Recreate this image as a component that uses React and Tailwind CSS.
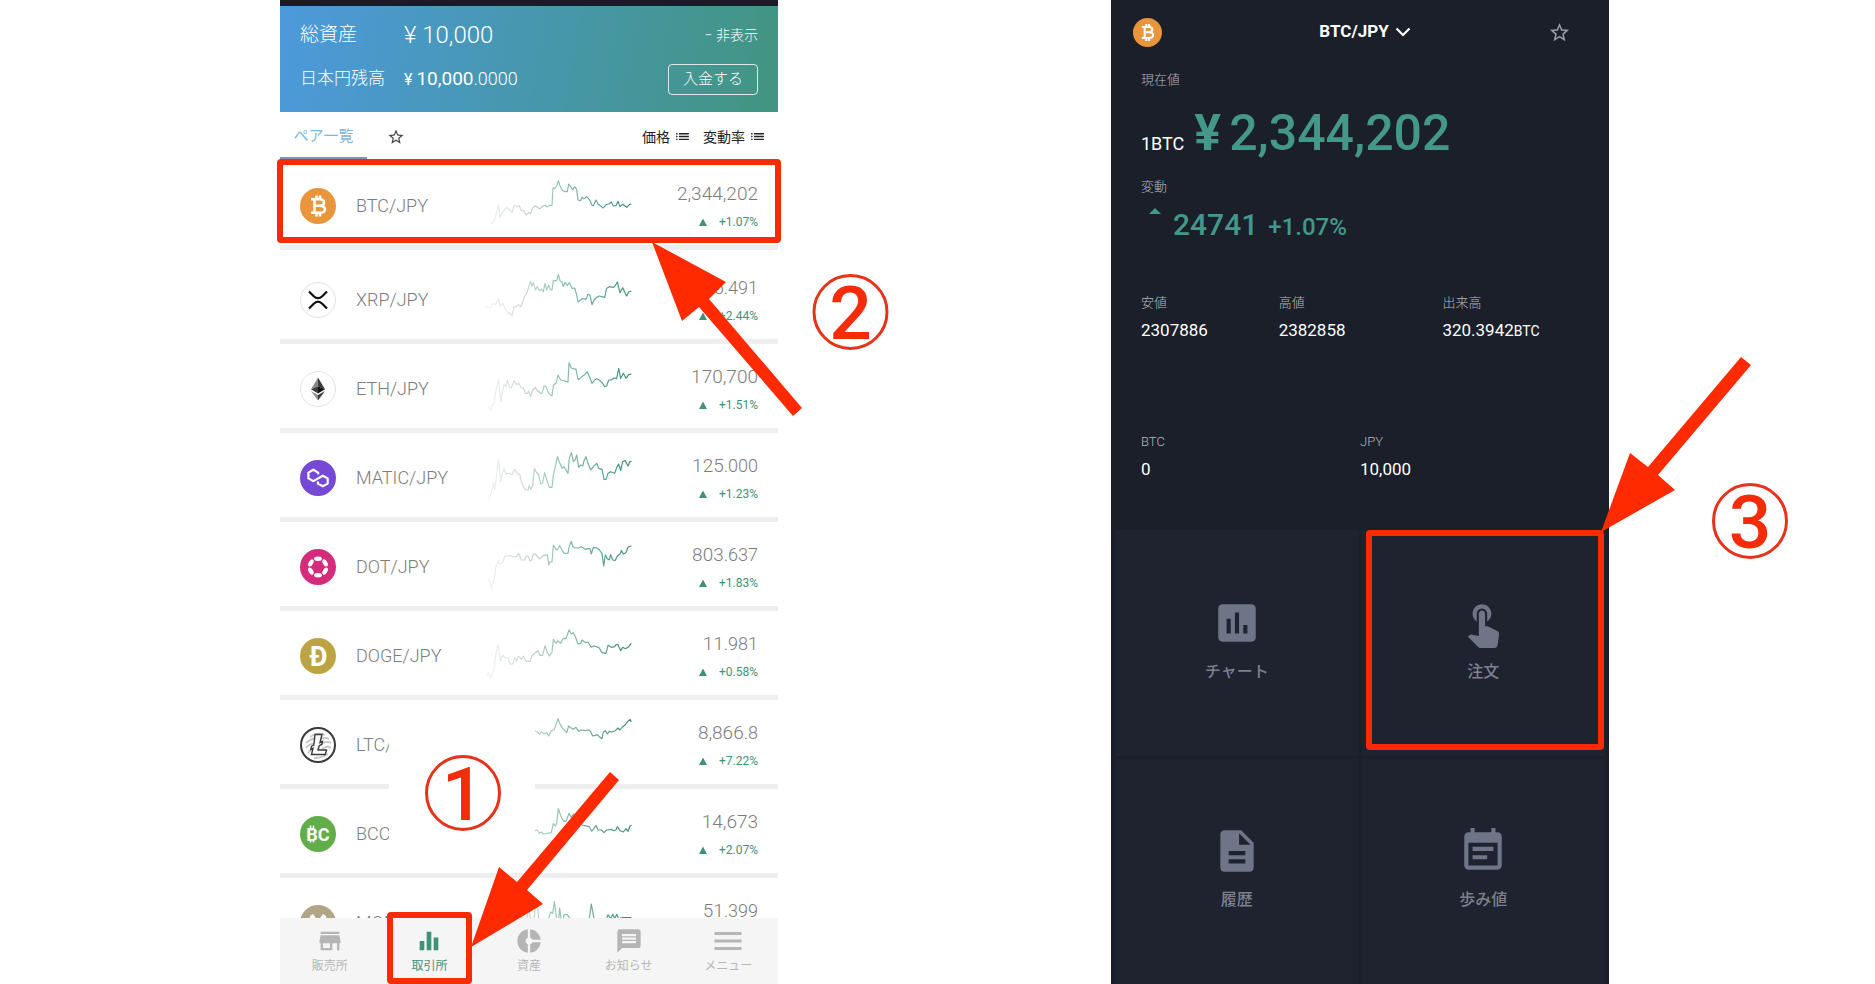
import React from 'react';
import {
    MdStore,
    MdEqualizer,
    MdDonutSmall,
    MdMessage,
    MdMenu,
    MdList,
    MdStarBorder,
    MdAssessment,
    MdTouchApp,
    MdDescription,
    MdEventNote,
} from 'react-icons/md';

const BtcCoin = ({ className }) => (
    <svg viewBox="0 0 36 36" className={className}>
        <circle cx="18" cy="18" r="18" fill="#e8953c" />
        <path
            d="M11 11.200 H19.500 Q24 11.200 24 14.400 Q24 17.600 19.500 17.700 H15 M19.500 17.700 Q25 17.900 25 21.200 Q25 24.800 19.500 24.800 H11 M14.500 11.200 V24.800 M16.500 7.500 V11 M20 7.500 V11 M16.500 25 V28.500 M20 25 V28.500"
            fill="none"
            stroke="#fff"
            strokeWidth="2.600"
        />
    </svg>
);

const XrpCoin = ({ className }) => (
    <svg viewBox="0 0 36 36" className={className}>
        <circle cx="18" cy="18" r="17.5" fill="#fff" stroke="#e2e2e2" />
        <path d="M9 9.5 L13.5 14 Q18 18.5 22.5 14 L27 9.5 M9 26.5 L13.5 22 Q18 17.500 22.500 22 L27 26.500" fill="none" stroke="#111" strokeWidth="2.200" />
    </svg>
);

const EthCoin = ({ className }) => (
    <svg viewBox="0 0 36 36" className={className}>
        <circle cx="18" cy="18" r="17.5" fill="#fff" stroke="#e2e2e2" />
        <path d="M18 6.500 L11 18.300 L18 15.200 Z" fill="#8a8a8a" />
        <path d="M18 6.500 L25 18.300 L18 15.200 Z" fill="#3c3c3b" />
        <path d="M11 18.300 L18 15.200 V22.500 Z" fill="#3c3c3b" />
        <path d="M25 18.300 L18 15.200 V22.500 Z" fill="#141414" />
        <path d="M11 20 L18 24 V29.500 Z" fill="#8c8c8c" />
        <path d="M25 20 L18 24 V29.500 Z" fill="#3c3c3b" />
    </svg>
);

const MaticCoin = ({ className }) => (
    <svg viewBox="0 0 36 36" className={className}>
        <circle cx="18" cy="18" r="18" fill="#7548d6" />
        <path
            d="M18.200 14.500 V12.600 L13.300 9.800 L8.400 12.600 V18.300 L13.300 21.100 L22.800 15.700 L27.700 18.400 V23.600 L22.800 26.300 L17.900 23.600 V21.600"
            fill="none"
            stroke="#fff"
            strokeWidth="2.200"
            strokeLinejoin="round"
        />
    </svg>
);

const DotCoin = ({ className }) => (
    <svg viewBox="0 0 36 36" className={className}>
        <circle cx="18" cy="18" r="18" fill="#d42c7a" />
        {[0, 60, 120, 180, 240, 300].map((angle) => (
            <ellipse key={angle} cx="18" cy="9.8" rx="3.900" ry="2.200" fill="#fff" transform={`rotate(${angle} 18 18)`} />
        ))}
    </svg>
);

const DogeCoin = ({ className }) => (
    <svg viewBox="0 0 36 36" className={className}>
        <circle cx="18" cy="18" r="18" fill="#bca443" />
        <text x="18.500" y="27.500" textAnchor="middle" fontSize="27" fontWeight="700" fill="#fff">Ð</text>
    </svg>
);

const LtcCoin = ({ className }) => (
    <svg viewBox="0 0 36 36" className={className}>
        <circle cx="18" cy="18" r="17" fill="#fff" stroke="#3a3a3a" strokeWidth="2" />
        <path d="M10 10 Q18 4 25 8 M6 16 Q12 11 17 11 M21 12 Q25 10 29 12 M6 21 Q10 16 14 17 M20 18 Q26 13 31 16 M8 26 Q11 22 14 22 M22 22 Q27 18 31 21 M14 31 Q22 31 28 27" fill="none" stroke="#c8c8c8" strokeWidth="1.800" />
        <path d="M15 7.500 H22 L20 15.500 L22.500 14.500 L21.800 17.500 L19.200 18.700 L18 23 H26.500 L25.300 27.500 H11.500 L13 21.300 L10.800 22.200 L11.600 19.200 L13.800 18 Z" fill="#fff" stroke="#3a3a3a" strokeWidth="1.400" />
    </svg>
);

const BccCoin = ({ className }) => (
    <svg viewBox="0 0 36 36" className={className}>
        <circle cx="18" cy="18" r="18" fill="#61ad4a" />
        <text x="18" y="24.500" textAnchor="middle" fontSize="18" fontWeight="700" fill="#fff">BC</text>
        <path d="M10.500 9.500 V12 M13.500 9.500 V12 M10.500 24 V26.500 M13.500 24 V26.500" stroke="#fff" strokeWidth="1.600" />
    </svg>
);

const MonaCoin = ({ className }) => (
    <svg viewBox="0 0 36 36" className={className}>
        <circle cx="18" cy="18" r="18" fill="#b0a587" />
        <path d="M8 27 L10 11 L13 9 L16 13 H20 L23 9 L26 11 L28 27 H24 L22.500 17 L18 23 L13.500 17 L12 27 Z" fill="#fff" />
    </svg>
);

// chartTop is where the row starts in the coordinates of its points
const pairs = [
    {
        name: 'BTC/JPY', coin: BtcCoin, price: '2,344,202', decimals: '', change: '+1.07%', chartTop: 3,
        points: '32,190 40,188 48,165 56,135 60,172 66,160 74,148 80,143 88,148 96,158 102,136 110,140 118,137 124,152 132,152 138,165 146,158 152,160 158,144 166,137 174,143 180,146 188,138 196,136 202,141 208,136 216,136 219,83 224,86 230,78 235,62 240,78 248,92 256,95 262,95 266,72 272,80 278,90 284,80 290,88 294,120 302,122 306,112 312,116 320,110 328,118 336,136 340,137 348,120 354,132 362,138 370,144 378,134 386,132 394,126 400,138 408,137 414,124 420,140 428,133 440,142 448,134 454,132',
    },
    {
        name: 'XRP/JPY', coin: XrpCoin, price: '65', decimals: '.491', change: '+2.44%', chartTop: 285,
        points: '16,440 28,443 34,440 38,430 46,435 56,416 60,438 68,430 76,447 84,458 90,460 96,467 102,440 108,440 116,434 122,440 128,426 134,410 142,395 148,375 152,363 156,380 160,368 166,390 172,380 178,392 186,388 190,395 195,370 200,390 206,376 212,390 216,390 220,362 230,362 235,343 240,362 246,366 250,380 255,367 262,376 268,368 276,385 284,384 290,405 294,426 302,420 308,415 318,418 324,403 330,406 336,434 342,420 350,412 358,408 374,412 380,385 388,380 400,382 406,376 412,366 420,398 428,383 434,396 440,408 446,396 454,393',
    },
    {
        name: 'ETH/JPY', coin: EthCoin, price: '170,700', decimals: '', change: '+1.51%', chartTop: 552,
        points: '22,740 28,742 32,752 36,738 42,730 48,690 56,660 62,724 66,705 72,672 78,680 82,660 88,680 94,684 102,662 110,674 116,670 124,684 130,684 136,700 142,700 146,694 152,710 158,690 166,682 174,694 182,700 186,700 192,678 198,680 206,700 216,708 220,676 228,670 234,645 242,660 250,662 258,664 264,666 267,608 274,624 280,626 288,628 294,658 300,656 308,648 314,644 322,635 330,655 336,670 344,660 350,656 358,660 366,668 374,680 380,678 386,660 394,660 402,654 410,656 416,625 422,655 430,640 438,655 446,644 454,642',
    },
    {
        name: 'MATIC/JPY', coin: MaticCoin, price: '125', decimals: '.000', change: '+1.23%', chartTop: 39,
        points: '22,238 30,232 36,210 40,190 44,208 50,165 56,120 62,185 68,160 72,145 78,162 86,160 96,164 104,148 112,160 120,166 124,185 130,198 136,210 144,210 148,196 152,208 158,198 163,145 170,158 176,165 182,192 188,188 194,158 200,178 208,202 216,202 220,165 226,140 232,110 238,125 246,145 252,140 258,150 264,160 268,115 274,98 280,125 286,118 290,105 296,142 302,135 308,138 313,120 318,110 324,130 332,150 340,140 350,130 356,145 366,148 372,178 378,178 384,160 392,155 404,160 410,142 416,132 422,152 428,125 436,122 444,138 450,124 454,124',
    },
    {
        name: 'DOT/JPY', coin: DotCoin, price: '803', decimals: '.637', change: '+1.83%', chartTop: 306,
        points: '22,480 30,482 34,506 42,480 48,440 54,422 58,432 68,428 74,410 90,406 98,410 110,410 116,400 124,420 134,420 138,408 144,408 150,422 154,422 160,402 166,402 174,412 180,416 190,407 202,404 206,434 210,426 216,426 220,375 228,388 232,390 239,377 246,390 252,400 264,400 268,378 274,364 278,380 286,384 296,384 304,380 316,388 324,386 330,386 334,402 340,382 350,384 358,390 366,400 371,438 376,405 382,416 388,420 392,404 398,420 406,421 412,408 420,402 424,392 430,402 438,398 444,382 454,377',
    },
    {
        name: 'DOGE/JPY', coin: DogeCoin, price: '11', decimals: '.981', change: '+0.58%', chartTop: 573,
        points: '20,768 26,758 32,775 40,756 48,700 54,675 62,724 68,705 74,712 84,714 90,732 98,732 104,712 110,722 116,708 124,718 130,708 138,724 150,724 156,708 166,698 174,692 180,706 188,706 195,677 202,698 208,708 216,696 220,658 228,670 234,662 242,670 250,655 258,656 267,630 274,642 280,638 286,650 294,672 302,670 306,660 316,668 324,666 334,682 342,678 350,680 358,684 366,698 378,700 384,676 394,682 404,680 408,674 414,674 422,692 428,682 436,686 444,682 454,670',
    },
    {
        name: 'LTC/JPY', coin: LtcCoin, price: '8,866', decimals: '.8', change: '+7.22%', chartTop: 0,
        points: '100,120 130,104 158,95 166,93 172,96 178,103 184,95 192,102 200,98 206,108 214,92 222,90 226,80 234,56 240,72 248,85 260,98 266,78 274,84 280,88 288,82 296,94 304,90 316,92 326,90 332,95 338,108 346,106 352,104 358,110 366,116 370,96 376,92 382,102 388,94 396,96 406,92 414,84 420,90 428,80 436,74 442,66 450,58 454,66',
    },
    {
        name: 'BCC/JPY', coin: BccCoin, price: '14,673', decimals: '', change: '+2.07%', chartTop: 267,
        points: '100,395 140,400 165,392 172,390 178,400 184,396 190,402 214,398 220,370 226,378 230,370 235,326 244,352 250,362 258,365 267,340 274,352 280,342 290,352 298,372 310,376 328,380 335,394 340,388 348,376 354,390 364,390 372,398 380,390 394,388 400,392 408,390 412,380 420,392 430,396 438,386 444,394 450,378 455,376',
    },
    {
        name: 'MONA/JPY', coin: MonaCoin, price: '51', decimals: '.399', change: '+1.90%', chartTop: 534,
        points: '100,640 140,660 146,625 152,660 162,655 166,622 174,628 176,660 206,656 212,636 218,640 223,605 230,656 236,656 239,624 243,656 250,656 252,644 262,644 270,656 328,656 334,612 342,656 380,656 384,644 392,656 398,643 404,656 410,643 416,656 428,653 454,653',
    },
];

const navItems = [
    { label: '販売所', icon: MdStore, size: 28 },
    { label: '取引所', icon: MdEqualizer, size: 28, active: true },
    { label: '資産', icon: MdDonutSmall, size: 28 },
    { label: 'お知らせ', icon: MdMessage, size: 28 },
    { label: 'メニュー', icon: MdMenu, size: 36 },
];

const tiles = [
    { label: 'チャート', icon: MdAssessment },
    { label: '注文', icon: MdTouchApp },
    { label: '履歴', icon: MdDescription },
    { label: '歩み値', icon: MdEventNote },
];

const Step = ({ cx, cy, n }) => (
    <g>
        <circle cx={cx} cy={cy} r="36.5" fill="none" stroke="#e8321a" strokeWidth="3" />
        <text x={cx} y={cy + 27} textAnchor="middle" fontSize="75" fontWeight="500" fill="#f52c0a">{n}</text>
    </g>
);

const PairRow = ({ pair, first }) => {
    const Coin = pair.coin;
    return (
        <li className={`border-b-5 border-[#eeeeee] ${first ? 'mb-[5px]' : ''}`}>
            <a href="#pair" className="flex h-[84px] items-center pt-1.5 pl-5 pr-5">
                <Coin className="w-9 h-9 shrink-0" />
                <span className="w-36 shrink-0 pl-5 text-lg font-light text-[#7c7c7c]">{pair.name}</span>
                <svg viewBox={`0 ${pair.chartTop + 9} 480 252`} className="w-40 h-[84px] shrink-0">
                    <polyline points={pair.points} fill="none" stroke="url(#spark)" strokeWidth="3.5" strokeLinejoin="round" />
                </svg>
                <span className="flex flex-1 flex-col items-end gap-1.5 pb-0.5">
                    <span className="text-[19px] leading-7 font-light text-[#7c7c7c]">
                        {pair.price}
                        <span className="text-lg">{pair.decimals}</span>
                    </span>
                    <span className="flex items-center gap-3 text-xs leading-4 text-[#3f917a]">
                        <svg viewBox="0 0 8 8" className="w-2 h-2">
                            <path d="M4 0.500 L8 8 H0 Z" fill="currentColor" />
                        </svg>
                        {pair.change}
                    </span>
                </span>
            </a>
        </li>
    );
};

const ExchangeScreen = () => (
    <section className="relative flex h-screen min-w-0 flex-col bg-white">
        {/* Stroke shared by every sparkline */}
        <svg className="absolute w-0 h-0" aria-hidden="true">
            <defs>
                <linearGradient id="spark" gradientUnits="userSpaceOnUse" x1="20" y1="0" x2="454" y2="0">
                    <stop offset="0" stopColor="#f1f4f3" />
                    <stop offset="0.25" stopColor="#ced9d5" />
                    <stop offset="0.5" stopColor="#8fc2b3" />
                    <stop offset="0.8" stopColor="#5aa28f" />
                    <stop offset="1" stopColor="#3d8a75" />
                </linearGradient>
            </defs>
        </svg>

        <div className="h-1.5 shrink-0 bg-[#171c28]" />

        {/* Balance */}
        <header className="flex h-[106px] shrink-0 flex-col gap-2 bg-linear-100 from-[#4d99dc] via-[#4797ae] to-[#429580] px-5 pt-[13px] text-white">
            <div className="flex h-8 items-center">
                <span className="w-[104px] text-[19px] font-light">総資産</span>
                <span className="text-2xl font-light">¥ 10,000</span>
                <button className="ml-auto text-sm font-light">− 非表示</button>
            </div>
            <div className="flex h-10 items-center">
                <span className="w-[104px] text-[17px] font-light">日本円残高</span>
                <span className="text-[19px]">
                    <span className="text-base">¥ </span> 10,000<span className="text-lg font-light">.0000</span>
                </span>
                <button className="ml-auto h-[31px] rounded-sm border border-white/80 px-[14px] text-[15px] font-light">入金する</button>
            </div>
        </header>

        {/* Tabs */}
        <div className="flex h-[49px] shrink-0 items-center pr-3 text-sm text-[#222222]">
            <button className="h-full w-[87px] border-b-4 border-[#7296bd] pt-1 text-[15px] text-[#7fb6de]">ペア一覧</button>
            <button className="ml-5 text-[#444444]" aria-label="お気に入り">
                <MdStarBorder size={18} />
            </button>
            <button className="ml-auto flex items-center gap-1">価格 <MdList size={17} /></button>
            <button className="ml-3 flex items-center gap-1">変動率 <MdList size={17} /></button>
        </div>

        <ul className="min-h-0 flex-1 overflow-hidden">
            {pairs.map((pair, index) => (
                <PairRow key={pair.name} pair={pair} first={index === 0} />
            ))}
        </ul>

        {/* Bottom navigation */}
        <nav className="flex h-[66px] shrink-0 bg-[#f5f5f5]">
            {navItems.map((item) => {
                const Icon = item.icon;
                return (
                    <button
                        key={item.label}
                        className={`relative flex flex-1 flex-col items-center pt-[5px] text-xs ${item.active ? 'text-[#3f917a]' : 'text-[#b5b5b5]'}`}
                    >
                        <span className="flex h-[35px] items-center">
                            <Icon size={item.size} />
                        </span>
                        <span className="leading-4">{item.label}</span>
                        {item.active && <span className="absolute inset-x-[7px] -top-[6px] bottom-0 rounded-sm border-6 border-[#fa2a05]" />}
                    </button>
                );
            })}
        </nav>

        {/* Guide marks */}
        <div className="pointer-events-none absolute top-[701px] left-[109px] h-[170px] w-[146px] bg-white" />
        <div className="pointer-events-none absolute -inset-x-[3px] top-[159px] h-[84px] rounded-sm border-6 border-[#fa2a05]" />
        <svg className="pointer-events-none absolute inset-0 h-full w-full overflow-visible" aria-hidden="true">
            <path d="M372 242 L446 282 L429 299 L522 408 L513 416 L419 307 L402 321 Z" fill="#ff2a00" />
            <path d="M191 947 L219 867 L237 882 L330 772 L339 780 L247 890 L263 904 Z" fill="#ff2a00" />
            <Step cx={183} cy={793} n="1" />
            <Step cx={570.500} cy={312} n="2" />
        </svg>
    </section>
);

const Stat = ({ label, value, unit }) => (
    <div className="flex flex-col gap-[3px] whitespace-nowrap">
        <dt className="text-[13px] leading-5 font-light text-[#b4b7be]">{label}</dt>
        <dd className="text-[17px] leading-7 text-white">
            {value}
            {unit && <span className="text-sm">{unit}</span>}
        </dd>
    </div>
);

const PairScreen = () => (
    <section className="relative flex h-screen min-w-0 flex-col bg-[#1b1f2a] text-white">
        <div className="flex h-[530px] shrink-0 flex-col">
            <header className="flex h-16 shrink-0 items-center justify-between pl-[22px] pr-[38px]">
                <BtcCoin className="w-[29px] h-[29px]" />
                <button className="ml-5 flex items-center gap-1.5 text-[17px] font-bold">
                    BTC/JPY
                    <svg viewBox="0 0 16 12" className="w-4 h-3">
                        <path d="M1.500 2.500 L8 9 L14.500 2.500" fill="none" stroke="currentColor" strokeWidth="2.200" />
                    </svg>
                </button>
                <button className="text-[#9a9da6]" aria-label="お気に入り">
                    <MdStarBorder size={23} />
                </button>
            </header>

            <div className="px-[30px]">
                <p className="pt-1.5 text-[13px] leading-5 font-light text-[#b4b7be]">現在値</p>
                <p className="flex items-baseline pt-[13px] leading-[60px]">
                    <span className="text-lg">1BTC</span>
                    <span className="ml-2.5 text-[50px] leading-[60px] font-medium text-[#43988a]">
                        <span className="mr-2 font-bold">¥</span>2,344,202
                    </span>
                </p>
                <p className="pt-3.5 text-[13px] leading-5 font-light text-[#b4b7be]">変動</p>
                <div className="flex pt-2 font-medium text-[#43988a]">
                    <svg viewBox="0 0 12 6" className="mt-[3px] ml-2 w-3 h-1.5">
                        <path d="M6 0 L12 6 H0 Z" fill="currentColor" />
                    </svg>
                    <p className="ml-3 flex items-baseline gap-2.5 text-3xl leading-10">
                        24741 <span className="text-2xl">+1.07%</span>
                    </p>
                </div>
            </div>

            <dl className="grid grid-cols-[137fr_163fr_136fr] px-[30px] pt-[48px]">
                <Stat label="安値" value="2307886" />
                <Stat label="高値" value="2382858" />
                <Stat label="出来高" value="320.3942" unit="BTC" />
            </dl>
            <dl className="grid grid-cols-2 px-[30px] pt-[88px]">
                <Stat label="BTC" value="0" />
                <Stat label="JPY" value="10,000" />
            </dl>
        </div>

        {/* Actions */}
        <div className="grid min-h-0 flex-1 grid-cols-2 grid-rows-2 gap-[3px] px-1">
            {tiles.map((tile) => {
                const Icon = tile.icon;
                return (
                    <button key={tile.label} className="flex flex-col items-center justify-center gap-3 bg-[#1f2330] pb-1 font-medium text-[#7b808f]">
                        <Icon size={50} className="text-[#6f7586]" />
                        <span className="text-base">{tile.label}</span>
                    </button>
                );
            })}
        </div>

        {/* Guide marks */}
        <div className="pointer-events-none absolute top-[530px] right-[5px] h-[220px] w-[238px] rounded-sm border-6 border-[#fa2a05]" />
        <svg className="pointer-events-none absolute inset-0 h-full w-full overflow-visible" aria-hidden="true">
            <path d="M490 532 L519 453 L537 467 L630 357 L640 365 L547 475 L564 490 Z" fill="#ff2a00" />
            <Step cx={639} cy={521} n="3" />
        </svg>
    </section>
);

const App = () => {
    return (
        <main className="grid min-h-screen grid-cols-[280fr_498fr_333fr_498fr_266fr] overflow-hidden bg-white font-['Roboto','Noto_Sans_CJK_JP',sans-serif]">
            <div />
            <ExchangeScreen />
            <div />
            <PairScreen />
            <div />
        </main>
    );
};

export default App;
